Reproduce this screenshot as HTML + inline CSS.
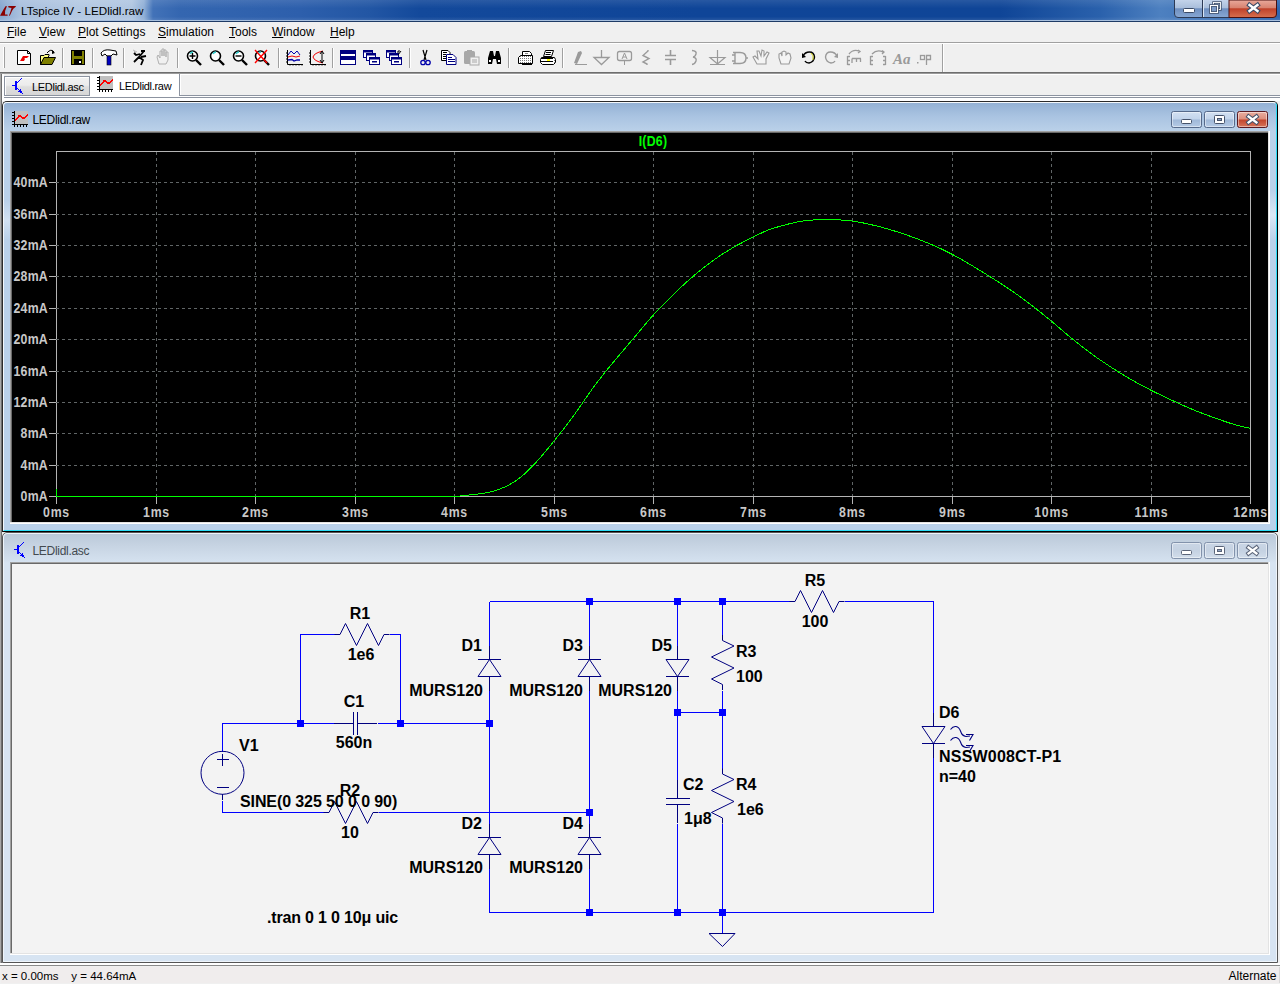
<!DOCTYPE html>
<html><head><meta charset="utf-8"><title>LTspice IV - LEDlidl.raw</title>
<style>
*{margin:0;padding:0;box-sizing:border-box}
html,body{width:1280px;height:984px;overflow:hidden;background:#f0f0f0;font-family:"Liberation Sans",sans-serif}
.a{position:absolute}
svg{position:absolute;left:0;top:0;overflow:visible}
.t{font-family:"Liberation Sans",sans-serif}
</style></head><body>

<div class="a" style="left:0;top:0;width:1280px;height:21px;background:linear-gradient(90deg,#86a6d0 0px,#a9c0de 20px,#b4c9e3 80px,#b0c6e1 132px,#90afd6 144px,#4272b8 153px,#3466b0 180px,#2d5fac 300px,#2256a4 370px,#13499b 420px,#0f4598 700px,#0f4597 1000px,#2a61ac 1100px,#4d80c0 1160px,#2f66b0 1280px)"></div>
<div class="a" style="left:0;top:0;width:1280px;height:21px;background:linear-gradient(rgba(255,255,255,0.10),rgba(255,255,255,0) 40%,rgba(0,0,0,0) 80%,rgba(255,255,255,0.12))"></div>
<div class="a" style="left:0;top:20px;width:1280px;height:1px;background:#a8c0de"></div>
<div class="a" style="left:0;top:21px;width:1280px;height:1px;background:#1f3b66"></div>
<svg width="1280" height="22"><path d="M6.5 6 L5.5 6.3 Q3 10 0 15.7 L7.7 15.7 L7.5 14.5 L5 14.5 Q4.5 11 6.8 6.5 Z" fill="#8a0000"/><path d="M8.2 6 L16 6 L15.5 7 Q13 8.5 12 11 L9.8 15.7 L9 15.5 Q10.5 12 11.5 8 L8.5 7.5 Z" fill="#8a0000"/></svg>
<svg width="1280" height="22"><text x="21" y="15" font-family="Liberation Sans" font-size="11.7" fill="#000">LTspice IV - LEDlidl.raw</text></svg>
<svg width="1280" height="22">
<defs>
<linearGradient id="cbg" x1="0" y1="0" x2="0" y2="1"><stop offset="0" stop-color="#c3d3ea"/><stop offset="0.45" stop-color="#a9bedb"/><stop offset="0.5" stop-color="#6f8fbf"/><stop offset="1" stop-color="#88a8d4"/></linearGradient>
<linearGradient id="cbr" x1="0" y1="0" x2="0" y2="1"><stop offset="0" stop-color="#e9a99c"/><stop offset="0.45" stop-color="#d8826f"/><stop offset="0.5" stop-color="#c0412a"/><stop offset="1" stop-color="#d7704f"/></linearGradient>
</defs>
<path d="M1174.5 0 L1174.5 14 Q1174.5 17.5 1178 17.5 L1273 17.5 Q1276.5 17.5 1276.5 14 L1276.5 0" fill="url(#cbg)" stroke="#2c3a55"/>
<path d="M1229 0 L1229 17.5 L1273 17.5 Q1276.5 17.5 1276.5 14 L1276.5 0 Z" fill="url(#cbr)" stroke="#4a1010"/>
<line x1="1202.5" y1="0" x2="1202.5" y2="17" stroke="#2c3a55"/>
<line x1="1203.5" y1="0" x2="1203.5" y2="17" stroke="#d8e4f3"/>
<rect x="1183.5" y="8.5" width="11" height="4" rx="1" fill="#fff" stroke="#3a4a66"/>
<rect x="1213.5" y="2.5" width="7" height="7" fill="none" stroke="#3a4a66" stroke-width="2.4"/>
<rect x="1213.5" y="2.5" width="7" height="7" fill="none" stroke="#fff" stroke-width="0.9"/>
<rect x="1210" y="5" width="8" height="8" fill="#7d9cc8"/>
<rect x="1210.5" y="5.5" width="7" height="7" fill="none" stroke="#3a4a66" stroke-width="2.6"/>
<rect x="1210.5" y="5.5" width="7" height="7" fill="none" stroke="#fff" stroke-width="1.1"/>
<path d="M1249.5 5 L1257.5 11 M1257.5 5 L1249.5 11" stroke="#3a4a66" stroke-width="4.6" stroke-linecap="square"/>
<path d="M1249.5 5 L1257.5 11 M1257.5 5 L1249.5 11" stroke="#fff" stroke-width="2.4" stroke-linecap="square"/>
</svg>
<div class="a" style="left:0;top:22px;width:1280px;height:20px;background:#f0f0f0"></div>
<div class="a" style="left:0;top:42px;width:1280px;height:1px;background:#a0a0a0"></div>
<div class="a" style="left:0;top:43px;width:1280px;height:1px;background:#fff"></div>
<div class="a t" style="left:7px;top:25px;font-size:12px;line-height:14px;color:#000;white-space:nowrap"><u>F</u>ile</div>
<div class="a t" style="left:39px;top:25px;font-size:12px;line-height:14px;color:#000;white-space:nowrap"><u>V</u>iew</div>
<div class="a t" style="left:78px;top:25px;font-size:12px;line-height:14px;color:#000;white-space:nowrap"><u>P</u>lot Settings</div>
<div class="a t" style="left:158px;top:25px;font-size:12px;line-height:14px;color:#000;white-space:nowrap"><u>S</u>imulation</div>
<div class="a t" style="left:229px;top:25px;font-size:12px;line-height:14px;color:#000;white-space:nowrap"><u>T</u>ools</div>
<div class="a t" style="left:272px;top:25px;font-size:12px;line-height:14px;color:#000;white-space:nowrap"><u>W</u>indow</div>
<div class="a t" style="left:330px;top:25px;font-size:12px;line-height:14px;color:#000;white-space:nowrap"><u>H</u>elp</div>
<div class="a" style="left:0;top:44px;width:1280px;height:28px;background:#f0f0f0"></div>
<div class="a" style="left:0;top:72px;width:1280px;height:1px;background:#555"></div>
<div class="a" style="left:0;top:73px;width:1280px;height:1px;background:#a0a0a0"></div>
<div class="a" style="left:942px;top:44px;width:1px;height:28px;background:#a0a0a0"></div>
<div class="a" style="left:943px;top:44px;width:1px;height:28px;background:#fff"></div>
<div class="a" style="left:3px;top:47px;width:1px;height:21px;background:#fff"></div>
<div class="a" style="left:4px;top:47px;width:1px;height:21px;background:#a0a0a0"></div>
<div class="a" style="left:62px;top:48px;width:1px;height:20px;background:#a0a0a0"></div>
<div class="a" style="left:63px;top:48px;width:1px;height:20px;background:#fff"></div>
<div class="a" style="left:92px;top:48px;width:1px;height:20px;background:#a0a0a0"></div>
<div class="a" style="left:93px;top:48px;width:1px;height:20px;background:#fff"></div>
<div class="a" style="left:123px;top:48px;width:1px;height:20px;background:#a0a0a0"></div>
<div class="a" style="left:124px;top:48px;width:1px;height:20px;background:#fff"></div>
<div class="a" style="left:177px;top:48px;width:1px;height:20px;background:#a0a0a0"></div>
<div class="a" style="left:178px;top:48px;width:1px;height:20px;background:#fff"></div>
<div class="a" style="left:278px;top:48px;width:1px;height:20px;background:#a0a0a0"></div>
<div class="a" style="left:279px;top:48px;width:1px;height:20px;background:#fff"></div>
<div class="a" style="left:332px;top:48px;width:1px;height:20px;background:#a0a0a0"></div>
<div class="a" style="left:333px;top:48px;width:1px;height:20px;background:#fff"></div>
<div class="a" style="left:409px;top:48px;width:1px;height:20px;background:#a0a0a0"></div>
<div class="a" style="left:410px;top:48px;width:1px;height:20px;background:#fff"></div>
<div class="a" style="left:508px;top:48px;width:1px;height:20px;background:#a0a0a0"></div>
<div class="a" style="left:509px;top:48px;width:1px;height:20px;background:#fff"></div>
<div class="a" style="left:562px;top:48px;width:1px;height:20px;background:#a0a0a0"></div>
<div class="a" style="left:563px;top:48px;width:1px;height:20px;background:#fff"></div>
<svg width="1280" height="80">
<path d="M17.5 50.5 L27.5 50.5 L30.5 53.5 L30.5 64.5 L17.5 64.5 Z" fill="#fff" stroke="#000"/><path d="M27.5 50.5 L27.5 53.5 L30.5 53.5" fill="none" stroke="#000"/><path d="M20 61 L23 56 L29 56 L27 58 L25 58 L23 61 Z M22 59 L25 59 L24 61 L21 61Z" fill="#e00"/>
<path d="M40.5 55.5 L44 55.5 L45 54.5 L49 54.5 L49 56 L40.5 64.5 Z" fill="#ffff80" stroke="#000"/><path d="M40.5 64.5 L44 57.5 L55.5 57.5 L52 64.5 Z" fill="#808000" stroke="#000"/><path d="M47 53 Q51 48 54 52" fill="none" stroke="#000"/><path d="M52 50 L55 53 L52 54 Z" fill="#000"/>
<rect x="71.5" y="50.5" width="13" height="14" fill="#808000" stroke="#000"/><rect x="74" y="51" width="8" height="5" fill="#000"/><rect x="74" y="59" width="8" height="5" fill="#000"/><rect x="79" y="61" width="2" height="2" fill="#fff"/>
<path d="M101 53 Q104 49 110 50 L116 51 L117 55 L113 54 L111 56 L107 56 L105 54 L102 56 Z" fill="#fff" stroke="#000"/><rect x="107" y="56" width="4" height="9" fill="#0000c0" stroke="#000" stroke-width="0.6"/>
<path d="M141 51 L145 51 M144 51 L139 57 L143 60 L141 65 M139 57 L134 62 M140 54 L136 55 L134 53 M141 57 L146 56" fill="none" stroke="#000" stroke-width="1.8"/><path d="M133 50 L137 52 M134 51 L136 53" stroke="#aaa" stroke-width="0.8"/>
<path d="M159 64 L157 57 L158 55 L160 58 L160 51 L162 51 L162 56 L162 49 L164 49 L164 56 L164 50 L166 50 L166 57 L166 52 L168 52 L168 60 L166 64 Z" fill="#f0f0f0" stroke="#b0b0b0"/>
<circle cx="192.5" cy="56" r="5" fill="#fff" stroke="#000" stroke-width="1.6"/><path d="M190 54 Q191 52 193 52" stroke="#3cc" stroke-width="1.5" fill="none"/><path d="M196 60 L201 65" stroke="#000" stroke-width="2.4"/><path d="M189.5 56 L195.5 56 M192.5 53 L192.5 59" stroke="#000" stroke-width="1.4"/>
<circle cx="215.5" cy="56" r="5" fill="#fff" stroke="#000" stroke-width="1.6"/><path d="M213 54 Q214 52 216 52" stroke="#3cc" stroke-width="1.5" fill="none"/><path d="M219 60 L224 65" stroke="#000" stroke-width="2.4"/>
<circle cx="238.5" cy="56" r="5" fill="#fff" stroke="#000" stroke-width="1.6"/><path d="M236 54 Q237 52 239 52" stroke="#3cc" stroke-width="1.5" fill="none"/><path d="M242 60 L247 65" stroke="#000" stroke-width="2.4"/><path d="M235.5 56 L241.5 56" stroke="#000" stroke-width="1.4"/>
<circle cx="260.5" cy="56" r="5" fill="#fff" stroke="#000" stroke-width="1.6"/><path d="M258 54 Q259 52 261 52" stroke="#3cc" stroke-width="1.5" fill="none"/><path d="M264 60 L269 65" stroke="#000" stroke-width="2.4"/><path d="M255 50 L267 63 M267 50 L255 63" stroke="#f00" stroke-width="1.4"/>
<path d="M287.5 50 L287.5 64.5 L303 64.5" stroke="#000" fill="none"/><path d="M286 53 L287 53 M286 56 L287 56 M286 59 L287 59 M286 62 L287 62 M290 65.5 L290 66 M293 65.5 L293 66 M296 65.5 L296 66 M299 65.5 L299 66 M302 65.5 L302 66" stroke="#000"/><path d="M288 55 L291 51 L294 54 L297 51 L300 55" stroke="#00a" fill="none"/><path d="M288 57 L292 56 L296 57 L300 56" stroke="#e00" fill="none"/><path d="M288 60 L292 59.5 L294 61 L297 60 L300 60" stroke="#00a" fill="none" stroke-width="1.3"/>
<path d="M310.5 50 L310.5 64.5 L326 64.5" stroke="#000" fill="none"/><path d="M309 53 L310 53 M309 56 L310 56 M309 59 L310 59 M309 62 L310 62 M313 65.5 L313 66 M316 65.5 L316 66 M319 65.5 L319 66 M322 65.5 L322 66 M325 65.5 L325 66" stroke="#000"/><path d="M323 51 Q314 53 313 57 Q314 61 323 63" stroke="#e00" fill="none"/><path d="M322 52 L322 62 M320 54 L322 51 L324 54 M320 60 L322 63 L324 60" stroke="#000" fill="none"/>
<rect x="340.5" y="50.5" width="15" height="14" fill="#fff" stroke="#000080"/><rect x="341" y="51" width="14" height="3" fill="#000080"/><rect x="341" y="56" width="14" height="2" fill="#000080"/><rect x="341" y="57" width="14" height="3" fill="#000080"/>
<rect x="363.5" y="50.5" width="9" height="7" fill="#fff" stroke="#000080"/><rect x="363" y="50" width="10" height="2.5" fill="#000080"/><rect x="366.5" y="53.5" width="9" height="7" fill="#fff" stroke="#000080"/><rect x="366" y="53" width="10" height="2.5" fill="#000080"/><rect x="369.5" y="57.5" width="10" height="7" fill="#fff" stroke="#000080"/><rect x="369" y="57" width="11" height="2.5" fill="#000080"/><rect x="372" y="61" width="5" height="1.5" fill="#000080"/>
<rect x="386.5" y="50.5" width="9" height="7" fill="#fff" stroke="#000080"/><rect x="386" y="50" width="10" height="2.5" fill="#000080"/><rect x="389.5" y="53.5" width="9" height="7" fill="#fff" stroke="#000080"/><rect x="389" y="53" width="10" height="2.5" fill="#000080"/><rect x="391.5" y="57.5" width="10" height="7" fill="#fff" stroke="#000080"/><rect x="391" y="57" width="11" height="2.5" fill="#000080"/><rect x="394" y="61" width="5" height="1.5" fill="#000080"/><path d="M398 55 L401 51 M398 51 L398 53 M398 51 L400 51" stroke="#000" fill="none"/>
<path d="M423 50 L426 60 M427 50 L424 60" stroke="#000" stroke-width="1.2"/><circle cx="423" cy="62.5" r="2.2" fill="none" stroke="#00a" stroke-width="1.3"/><circle cx="428" cy="62.5" r="2.2" fill="none" stroke="#00a" stroke-width="1.3"/>
<path d="M441.5 50.5 L448 50.5 L450 52.5 L450 60.5 L441.5 60.5 Z" fill="#fff" stroke="#000"/><path d="M443 52.5 L447 52.5 M443 54.5 L446 54.5 M443 56.5 L446 56.5 M443 58.5 L446 58.5" stroke="#000" fill="none"/><path d="M446.5 54.5 L453 54.5 L456 57.5 L456 64.5 L446.5 64.5 Z" fill="#fff" stroke="#000080"/><path d="M448 57.5 L452 57.5 M448 59.5 L455 59.5 M448 61.5 L455 61.5" stroke="#000080" fill="none"/>
<rect x="464" y="51" width="11" height="13" rx="1.5" fill="#a8a8a8"/><rect x="467" y="50" width="5" height="2" fill="#a8a8a8"/><rect x="470" y="57" width="9" height="8" fill="#f0f0f0" stroke="#a8a8a8"/><path d="M472 60 L477 60 M472 62 L477 62" stroke="#a8a8a8"/>
<path d="M488 64 L488 58 L490 51 L493 51 L494 56 L495 56 L496 51 L499 51 L501 58 L501 64 L497 64 L496 59 L493 59 L492 64 Z" fill="#000"/><rect x="489" y="60" width="2" height="2" fill="#fff"/><rect x="498" y="60" width="2" height="2" fill="#fff"/>
<defs><pattern id="hatch" width="2" height="2" patternUnits="userSpaceOnUse"><rect width="2" height="2" fill="#fff"/><rect width="1" height="1" fill="#777"/></pattern></defs>
<path d="M522.5 51.5 H529.5 L531.5 53.5 V55.5 H522.5 Z" fill="#fff" stroke="#000"/><path d="M520.5 55.5 H532.5 V63.5 H518.5 V57.5 Z" fill="url(#hatch)" stroke="#000"/><rect x="522" y="63" width="10" height="2" fill="#000"/><rect x="525" y="53" width="3" height="1" fill="#888"/>
<path d="M545.5 50.5 H553.5 L551.5 56.5 H543.5 Z" fill="#fff" stroke="#000"/><path d="M546 52.5 H551 M545.5 54.5 H550.5" stroke="#000" fill="none"/><path d="M541.5 57.5 H554.5 L555.5 59.5 V62.5 L553.5 64.5 H542.5 L540.5 62.5 V59.5 Z" fill="#fff" stroke="#000"/><path d="M541 58.5 H555 M541 61.5 H555" stroke="#000" fill="none"/><rect x="547" y="59" width="3" height="2" fill="#ff0"/><rect x="553" y="58" width="2" height="5" fill="url(#hatch)"/>
<path d="M574 63 L578 52 L581 51 L582 53 L577 64 Z" fill="#9a9a9a"/><path d="M575 64.5 L587 64.5" stroke="#9a9a9a"/>
<path d="M601.5 50 L601.5 57 M594 57.5 L609 57.5 L601.5 64.5 Z" fill="none" stroke="#9a9a9a" stroke-width="1.3"/>
<rect x="617.5" y="51.5" width="14" height="9" rx="2" fill="none" stroke="#9a9a9a" stroke-width="1.3"/><path d="M624.5 61 L624.5 65" stroke="#9a9a9a"/><path d="M622 59 L624.5 53 L627 59 M623 57 L626 57" stroke="#9a9a9a" fill="none"/>
<path d="M648 50 L648 51 L643 55.5 L649 58.5 L643 62 L647 64 L647 65" stroke="#9a9a9a" fill="none" stroke-width="1.4"/>
<path d="M670.5 50 L670.5 55 M665 55.5 L676 55.5 M665 59.5 L676 59.5 M670.5 60 L670.5 65" stroke="#9a9a9a" stroke-width="1.6" fill="none"/>
<path d="M692 50.5 Q697 51 696 54 Q695 57 693 57 Q697 58 696 61 Q695 64 692 64.5" stroke="#9a9a9a" stroke-width="1.4" fill="none"/>
<path d="M717.5 50 L717.5 65 M710 57.5 L725 57.5 L717.5 64 Z M710 64.5 L725 64.5" stroke="#9a9a9a" stroke-width="1.2" fill="none"/>
<path d="M733 52.5 L740 52.5 Q746 52.5 746 58 Q746 63.5 740 63.5 L733 63.5 M735 52.5 L735 63.5 M732 55 L735 55 M732 61 L735 61 M746 58 L748 58" stroke="#9a9a9a" stroke-width="1.4" fill="none"/>
<path d="M757 64 L753 57 L755 56 L758 59 L757 51 L759 51 L761 56 L762 50 L764 51 L764 56 L767 52 L769 53 L766 59 L766 64 Z" fill="#f4f4f4" stroke="#9a9a9a" stroke-width="1.1"/>
<path d="M781 64 L779 58 L779 54 L781 53 L782 56 L782 52 L784 51 L786 52 L786 55 L788 53 L790 54 L791 58 L789 64 Z" fill="#f4f4f4" stroke="#9a9a9a" stroke-width="1.1"/>
<path d="M803 56 Q805 52 809.5 52 Q814 52 814.5 57 Q814 62 809 63 Q806 63 805 61" stroke="#000" stroke-width="1.5" fill="none"/><path d="M802 53 L802 58 L806 57 Z" fill="#000"/><path d="M811 53 Q814 55 813 60" stroke="#cc0" stroke-width="0.9" fill="none"/>
<path d="M837 56 Q835 52 830.5 52 Q826 52 825.5 57 Q826 62 831 63 Q834 63 835 61" stroke="#9a9a9a" stroke-width="1.4" fill="none"/><path d="M838 53 L838 58 L834 57 Z" fill="#9a9a9a"/>
<path d="M847.5 56 L847.5 65 M847.5 56.5 L850 56.5 M847.5 60.5 L850 60.5 M847.5 64.5 L850 64.5 M852 58.5 L852 63 M852 58.5 L861 58.5 M856.5 58.5 L856.5 62 M860.5 58.5 L860.5 62 M849 54 Q853 49 859 51 M858 50 L860 51.5 L858 53" stroke="#9a9a9a" stroke-width="1.3" fill="none"/>
<path d="M870.5 56 L870.5 65 M870.5 56.5 L873 56.5 M870.5 60.5 L873 60.5 M870.5 64.5 L873 64.5 M885.5 56 L885.5 65 M885.5 56.5 L883 56.5 M885.5 60.5 L883 60.5 M885.5 64.5 L883 64.5 M872 54 Q877 49 883 52 M882 50.5 L884 52 L882 54" stroke="#9a9a9a" stroke-width="1.3" fill="none"/>
<text x="893" y="64" font-family="Liberation Serif" font-style="italic" font-weight="bold" font-size="15" fill="#9a9a9a">Aa</text>
<rect x="917" y="62" width="1.5" height="1.5" fill="#9a9a9a"/><rect x="920.5" y="55.5" width="4" height="4" fill="none" stroke="#9a9a9a" stroke-width="1.3"/><path d="M926.5 65 L926.5 55.5 L930.5 55.5 L930.5 59.5 L926.5 59.5" stroke="#9a9a9a" stroke-width="1.3" fill="none"/>
</svg>
<div class="a" style="left:0;top:74px;width:1280px;height:24px;background:#f0f0f0"></div>
<div class="a" style="left:0;top:72px;width:1280px;height:1px;background:#6e6e6e"></div>
<div class="a" style="left:0;top:73px;width:1280px;height:1px;background:#9a9a9a"></div>
<div class="a" style="left:0;top:74px;width:1280px;height:27px;background:#f0f0f0"></div>
<div class="a" style="left:179px;top:74px;width:1101px;height:22px;border-left:1px solid #8c93a0;border-bottom:1px solid #8c93a0;background:#f0f0f0"></div>
<div class="a" style="left:180px;top:74px;width:1100px;height:1px;background:#fff"></div>
<div class="a" style="left:180px;top:74px;width:1px;height:21px;background:#fff"></div>
<div class="a" style="left:4px;top:76px;width:86px;height:20px;border:1px solid #8c93a0;background:linear-gradient(#f2f2f2,#ececec 45%,#dedede 55%,#d6d6d6)"></div>
<div class="a" style="left:5px;top:77px;width:84px;height:1px;background:#fff"></div>
<div class="a" style="left:5px;top:77px;width:1px;height:18px;background:#fff"></div>
<div class="a" style="left:90px;top:74px;width:89px;height:23px;background:#fff"></div>
<div class="a" style="left:2px;top:96px;width:1278px;height:1px;background:#fff"></div>
<div class="a" style="left:2px;top:97px;width:1278px;height:1px;background:#8c93a0"></div>
<div class="a" style="left:2px;top:98px;width:1278px;height:3px;background:#fff"></div>
<div class="a" style="left:2px;top:74px;width:2px;height:24px;background:#fff"></div>
<svg width="1280" height="100"><rect x="15" y="81" width="2" height="9" fill="#0000ff"/><rect x="12" y="85" width="3" height="1" fill="#0000ff"/><rect x="17" y="82" width="1" height="1" fill="#0000ff"/><rect x="18" y="81" width="1" height="1" fill="#0000ff"/><rect x="19" y="80" width="1" height="1" fill="#0000ff"/><rect x="20" y="79" width="1" height="1" fill="#0000ff"/><rect x="21" y="78" width="1" height="1" fill="#0000ff"/><rect x="17" y="88" width="1" height="1" fill="#0000ff"/><rect x="18" y="89" width="1" height="1" fill="#0000ff"/><rect x="19" y="90" width="1" height="1" fill="#0000ff"/><rect x="20" y="91" width="1" height="1" fill="#0000ff"/><rect x="21" y="92" width="1" height="1" fill="#0000ff"/><rect x="22" y="93" width="1" height="1" fill="#0000ff"/><rect x="20" y="89" width="1" height="1" fill="#0000ff"/><rect x="20" y="90" width="1" height="1" fill="#0000ff"/><rect x="18" y="91" width="4" height="1" fill="#0000ff"/><rect x="20" y="92" width="2" height="1" fill="#0000ff"/><rect x="100" y="76" width="13" height="13" fill="#c0c0c0"/><rect x="99" y="76" width="1" height="14" fill="#000"/><rect x="97" y="89" width="16" height="1" fill="#000"/><rect x="97" y="77" width="2" height="1" fill="#000"/><rect x="97" y="80" width="2" height="1" fill="#000"/><rect x="97" y="83" width="2" height="1" fill="#000"/><rect x="97" y="86" width="2" height="1" fill="#000"/><rect x="99" y="90" width="1" height="2" fill="#000"/><rect x="102" y="90" width="1" height="2" fill="#000"/><rect x="105" y="90" width="1" height="2" fill="#000"/><rect x="108" y="90" width="1" height="2" fill="#000"/><rect x="111" y="90" width="1" height="2" fill="#000"/><rect x="100" y="84" width="1" height="2" fill="#ff0000"/><rect x="101" y="83" width="1" height="2" fill="#ff0000"/><rect x="102" y="82" width="1" height="2" fill="#ff0000"/><rect x="103" y="81" width="1" height="2" fill="#ff0000"/><rect x="104" y="80" width="1" height="2" fill="#ff0000"/><rect x="105" y="80" width="1" height="2" fill="#ff0000"/><rect x="106" y="81" width="1" height="2" fill="#ff0000"/><rect x="107" y="82" width="1" height="2" fill="#ff0000"/><rect x="108" y="82" width="1" height="2" fill="#ff0000"/><rect x="109" y="82" width="1" height="2" fill="#ff0000"/><rect x="110" y="81" width="1" height="2" fill="#ff0000"/><rect x="111" y="80" width="1" height="2" fill="#ff0000"/><rect x="112" y="79" width="1" height="2" fill="#ff0000"/><rect x="103" y="80" width="2" height="1" fill="#ff0000"/><rect x="106" y="82" width="1" height="1" fill="#ff0000"/></svg>
<div class="a t" style="left:32px;top:80px;font-size:11px;letter-spacing:-0.3px;line-height:14px;color:#000;white-space:nowrap">LEDlidl.asc</div>
<div class="a t" style="left:119px;top:79px;font-size:11px;letter-spacing:-0.3px;line-height:14px;color:#000;white-space:nowrap">LEDlidl.raw</div>
<div class="a" style="left:0;top:74px;width:2px;height:890px;background:linear-gradient(90deg,#a8a8a8 0,#a8a8a8 1px,#6f6f6f 1px)"></div>
<div class="a" style="left:2px;top:101px;width:1276px;height:431px;border:1px solid #2b2b2b;border-right-color:#000;border-bottom-color:#000;border-radius:5px 5px 0 0;background:linear-gradient(#92b0d4 0px,#a9c3e1 14px,#b8cfe8 27px,#bad1ea 30px,#bad1ea 100%)"></div>
<div class="a" style="left:3px;top:102px;width:1274px;height:429px;border:1px solid #f3f7fb;border-right-color:#2bdcf6;border-bottom-color:#2bdcf6;border-radius:4px 4px 0 0"></div>
<svg width="1280" height="140"><rect x="15" y="111" width="13" height="13" fill="#c0c0c0"/><rect x="14" y="111" width="1" height="14" fill="#000"/><rect x="12" y="124" width="16" height="1" fill="#000"/><rect x="12" y="112" width="2" height="1" fill="#000"/><rect x="12" y="115" width="2" height="1" fill="#000"/><rect x="12" y="118" width="2" height="1" fill="#000"/><rect x="12" y="121" width="2" height="1" fill="#000"/><rect x="14" y="125" width="1" height="2" fill="#000"/><rect x="17" y="125" width="1" height="2" fill="#000"/><rect x="20" y="125" width="1" height="2" fill="#000"/><rect x="23" y="125" width="1" height="2" fill="#000"/><rect x="26" y="125" width="1" height="2" fill="#000"/><rect x="15" y="119" width="1" height="2" fill="#ff0000"/><rect x="16" y="118" width="1" height="2" fill="#ff0000"/><rect x="17" y="117" width="1" height="2" fill="#ff0000"/><rect x="18" y="116" width="1" height="2" fill="#ff0000"/><rect x="19" y="115" width="1" height="2" fill="#ff0000"/><rect x="20" y="115" width="1" height="2" fill="#ff0000"/><rect x="21" y="116" width="1" height="2" fill="#ff0000"/><rect x="22" y="117" width="1" height="2" fill="#ff0000"/><rect x="23" y="117" width="1" height="2" fill="#ff0000"/><rect x="24" y="117" width="1" height="2" fill="#ff0000"/><rect x="25" y="116" width="1" height="2" fill="#ff0000"/><rect x="26" y="115" width="1" height="2" fill="#ff0000"/><rect x="27" y="114" width="1" height="2" fill="#ff0000"/><rect x="18" y="115" width="2" height="1" fill="#ff0000"/><rect x="21" y="117" width="1" height="1" fill="#ff0000"/><text x="32.5" y="124" font-family="Liberation Sans" font-size="12" letter-spacing="-0.3" fill="#000">LEDlidl.raw</text></svg>
<svg width="1280" height="984">
<defs>
<linearGradient id="pwb" x1="0" y1="0" x2="0" y2="1"><stop offset="0" stop-color="#d3e1f2"/><stop offset="0.48" stop-color="#c2d4eb"/><stop offset="0.52" stop-color="#9fb8d8"/><stop offset="1" stop-color="#b6cbe6"/></linearGradient>
<linearGradient id="pwr" x1="0" y1="0" x2="0" y2="1"><stop offset="0" stop-color="#eab0a2"/><stop offset="0.48" stop-color="#dc8e7c"/><stop offset="0.52" stop-color="#c2452c"/><stop offset="1" stop-color="#d7775d"/></linearGradient>
</defs>
<rect x="1171.5" y="111.5" width="30" height="16" rx="2" fill="url(#pwb)" stroke="#55698a"/>
<rect x="1204.5" y="111.5" width="30" height="16" rx="2" fill="url(#pwb)" stroke="#55698a"/>
<rect x="1237.5" y="111.5" width="30" height="16" rx="2" fill="url(#pwr)" stroke="#5a1a22"/>
<rect x="1172.5" y="112.5" width="28" height="14" rx="1.5" fill="none" stroke="#fff" stroke-opacity="0.45"/>
<rect x="1205.5" y="112.5" width="28" height="14" rx="1.5" fill="none" stroke="#fff" stroke-opacity="0.45"/>
<rect x="1238.5" y="112.5" width="28" height="14" rx="1.5" fill="none" stroke="#fff" stroke-opacity="0.45"/>
<rect x="1181.5" y="119.5" width="10" height="4" rx="1" fill="#fff" stroke="#45526a"/>
<rect x="1214.5" y="115.5" width="10" height="8" rx="1" fill="#fff" stroke="#45526a"/>
<rect x="1217.5" y="118.5" width="4" height="2" fill="#8ea4c4" stroke="#45526a"/>
<path d="M1248.5 116.5 L1256.5 122.5 M1256.5 116.5 L1248.5 122.5" stroke="#45526a" stroke-width="4.2" stroke-linecap="square"/>
<path d="M1248.5 116.5 L1256.5 122.5 M1256.5 116.5 L1248.5 122.5" stroke="#fff" stroke-width="2.2" stroke-linecap="square"/>
</svg>
<div class="a" style="left:1270px;top:190px;width:6px;height:50px;background:linear-gradient(rgba(230,240,250,0),rgba(230,240,250,0.75) 50%,rgba(230,240,250,0))"></div>
<div class="a" style="left:4px;top:200px;width:6px;height:40px;background:linear-gradient(rgba(225,236,248,0),rgba(225,236,248,0.6) 50%,rgba(225,236,248,0))"></div>
<div class="a" style="left:10px;top:131px;width:1260px;height:393px;background:#fff"></div>
<div class="a" style="left:10px;top:131px;width:1259px;height:392px;background:#e3e3e3"></div>
<div class="a" style="left:10px;top:131px;width:1258px;height:391px;background:#a0a0a0"></div>
<div class="a" style="left:11px;top:132px;width:1257px;height:390px;background:#696969"></div>
<div class="a" style="left:12px;top:133px;width:1256px;height:389px;background:#000"></div>
<svg width="1280" height="540" shape-rendering="crispEdges">
<rect x="56.5" y="151.5" width="1194" height="345" fill="none" stroke="#b4b4b4"/>
<line x1="156.5" y1="152" x2="156.5" y2="496" stroke="#606566" stroke-dasharray="3 3"/>
<line x1="255.5" y1="152" x2="255.5" y2="496" stroke="#606566" stroke-dasharray="3 3"/>
<line x1="355.5" y1="152" x2="355.5" y2="496" stroke="#606566" stroke-dasharray="3 3"/>
<line x1="454.5" y1="152" x2="454.5" y2="496" stroke="#606566" stroke-dasharray="3 3"/>
<line x1="554.5" y1="152" x2="554.5" y2="496" stroke="#606566" stroke-dasharray="3 3"/>
<line x1="653.5" y1="152" x2="653.5" y2="496" stroke="#606566" stroke-dasharray="3 3"/>
<line x1="753.5" y1="152" x2="753.5" y2="496" stroke="#606566" stroke-dasharray="3 3"/>
<line x1="852.5" y1="152" x2="852.5" y2="496" stroke="#606566" stroke-dasharray="3 3"/>
<line x1="952.5" y1="152" x2="952.5" y2="496" stroke="#606566" stroke-dasharray="3 3"/>
<line x1="1051.5" y1="152" x2="1051.5" y2="496" stroke="#606566" stroke-dasharray="3 3"/>
<line x1="1151.5" y1="152" x2="1151.5" y2="496" stroke="#606566" stroke-dasharray="3 3"/>
<line x1="56.5" y1="497" x2="56.5" y2="504" stroke="#b4b4b4"/>
<line x1="156.5" y1="497" x2="156.5" y2="504" stroke="#b4b4b4"/>
<line x1="255.5" y1="497" x2="255.5" y2="504" stroke="#b4b4b4"/>
<line x1="355.5" y1="497" x2="355.5" y2="504" stroke="#b4b4b4"/>
<line x1="454.5" y1="497" x2="454.5" y2="504" stroke="#b4b4b4"/>
<line x1="554.5" y1="497" x2="554.5" y2="504" stroke="#b4b4b4"/>
<line x1="653.5" y1="497" x2="653.5" y2="504" stroke="#b4b4b4"/>
<line x1="753.5" y1="497" x2="753.5" y2="504" stroke="#b4b4b4"/>
<line x1="852.5" y1="497" x2="852.5" y2="504" stroke="#b4b4b4"/>
<line x1="952.5" y1="497" x2="952.5" y2="504" stroke="#b4b4b4"/>
<line x1="1051.5" y1="497" x2="1051.5" y2="504" stroke="#b4b4b4"/>
<line x1="1151.5" y1="497" x2="1151.5" y2="504" stroke="#b4b4b4"/>
<line x1="1250.5" y1="497" x2="1250.5" y2="504" stroke="#b4b4b4"/>
<line x1="56" y1="465.5" x2="1250" y2="465.5" stroke="#606566" stroke-dasharray="3 3"/>
<line x1="56" y1="433.5" x2="1250" y2="433.5" stroke="#606566" stroke-dasharray="3 3"/>
<line x1="56" y1="402.5" x2="1250" y2="402.5" stroke="#606566" stroke-dasharray="3 3"/>
<line x1="56" y1="371.5" x2="1250" y2="371.5" stroke="#606566" stroke-dasharray="3 3"/>
<line x1="56" y1="339.5" x2="1250" y2="339.5" stroke="#606566" stroke-dasharray="3 3"/>
<line x1="56" y1="308.5" x2="1250" y2="308.5" stroke="#606566" stroke-dasharray="3 3"/>
<line x1="56" y1="276.5" x2="1250" y2="276.5" stroke="#606566" stroke-dasharray="3 3"/>
<line x1="56" y1="245.5" x2="1250" y2="245.5" stroke="#606566" stroke-dasharray="3 3"/>
<line x1="56" y1="214.5" x2="1250" y2="214.5" stroke="#606566" stroke-dasharray="3 3"/>
<line x1="56" y1="182.5" x2="1250" y2="182.5" stroke="#606566" stroke-dasharray="3 3"/>
<line x1="49" y1="496.5" x2="56" y2="496.5" stroke="#b4b4b4"/>
<line x1="49" y1="465.5" x2="56" y2="465.5" stroke="#b4b4b4"/>
<line x1="49" y1="433.5" x2="56" y2="433.5" stroke="#b4b4b4"/>
<line x1="49" y1="402.5" x2="56" y2="402.5" stroke="#b4b4b4"/>
<line x1="49" y1="371.5" x2="56" y2="371.5" stroke="#b4b4b4"/>
<line x1="49" y1="339.5" x2="56" y2="339.5" stroke="#b4b4b4"/>
<line x1="49" y1="308.5" x2="56" y2="308.5" stroke="#b4b4b4"/>
<line x1="49" y1="276.5" x2="56" y2="276.5" stroke="#b4b4b4"/>
<line x1="49" y1="245.5" x2="56" y2="245.5" stroke="#b4b4b4"/>
<line x1="49" y1="214.5" x2="56" y2="214.5" stroke="#b4b4b4"/>
<line x1="49" y1="182.5" x2="56" y2="182.5" stroke="#b4b4b4"/>
</svg>
<svg width="1280" height="540">
<g transform="translate(48,501) scale(0.88,1)"><text x="0" y="0" text-anchor="end" font-family="Liberation Sans" font-weight="bold" font-size="14" letter-spacing="0.3" fill="#c8c8c8">0mA</text></g>
<g transform="translate(48,470) scale(0.88,1)"><text x="0" y="0" text-anchor="end" font-family="Liberation Sans" font-weight="bold" font-size="14" letter-spacing="0.3" fill="#c8c8c8">4mA</text></g>
<g transform="translate(48,438) scale(0.88,1)"><text x="0" y="0" text-anchor="end" font-family="Liberation Sans" font-weight="bold" font-size="14" letter-spacing="0.3" fill="#c8c8c8">8mA</text></g>
<g transform="translate(48,407) scale(0.88,1)"><text x="0" y="0" text-anchor="end" font-family="Liberation Sans" font-weight="bold" font-size="14" letter-spacing="0.3" fill="#c8c8c8">12mA</text></g>
<g transform="translate(48,376) scale(0.88,1)"><text x="0" y="0" text-anchor="end" font-family="Liberation Sans" font-weight="bold" font-size="14" letter-spacing="0.3" fill="#c8c8c8">16mA</text></g>
<g transform="translate(48,344) scale(0.88,1)"><text x="0" y="0" text-anchor="end" font-family="Liberation Sans" font-weight="bold" font-size="14" letter-spacing="0.3" fill="#c8c8c8">20mA</text></g>
<g transform="translate(48,313) scale(0.88,1)"><text x="0" y="0" text-anchor="end" font-family="Liberation Sans" font-weight="bold" font-size="14" letter-spacing="0.3" fill="#c8c8c8">24mA</text></g>
<g transform="translate(48,281) scale(0.88,1)"><text x="0" y="0" text-anchor="end" font-family="Liberation Sans" font-weight="bold" font-size="14" letter-spacing="0.3" fill="#c8c8c8">28mA</text></g>
<g transform="translate(48,250) scale(0.88,1)"><text x="0" y="0" text-anchor="end" font-family="Liberation Sans" font-weight="bold" font-size="14" letter-spacing="0.3" fill="#c8c8c8">32mA</text></g>
<g transform="translate(48,219) scale(0.88,1)"><text x="0" y="0" text-anchor="end" font-family="Liberation Sans" font-weight="bold" font-size="14" letter-spacing="0.3" fill="#c8c8c8">36mA</text></g>
<g transform="translate(48,187) scale(0.88,1)"><text x="0" y="0" text-anchor="end" font-family="Liberation Sans" font-weight="bold" font-size="14" letter-spacing="0.3" fill="#c8c8c8">40mA</text></g>
<g transform="translate(56.5,517) scale(0.88,1)"><text x="0" y="0" text-anchor="middle" font-family="Liberation Sans" font-weight="bold" font-size="14" letter-spacing="0.9" fill="#c8c8c8">0ms</text></g>
<g transform="translate(156.5,517) scale(0.88,1)"><text x="0" y="0" text-anchor="middle" font-family="Liberation Sans" font-weight="bold" font-size="14" letter-spacing="0.9" fill="#c8c8c8">1ms</text></g>
<g transform="translate(255.5,517) scale(0.88,1)"><text x="0" y="0" text-anchor="middle" font-family="Liberation Sans" font-weight="bold" font-size="14" letter-spacing="0.9" fill="#c8c8c8">2ms</text></g>
<g transform="translate(355.5,517) scale(0.88,1)"><text x="0" y="0" text-anchor="middle" font-family="Liberation Sans" font-weight="bold" font-size="14" letter-spacing="0.9" fill="#c8c8c8">3ms</text></g>
<g transform="translate(454.5,517) scale(0.88,1)"><text x="0" y="0" text-anchor="middle" font-family="Liberation Sans" font-weight="bold" font-size="14" letter-spacing="0.9" fill="#c8c8c8">4ms</text></g>
<g transform="translate(554.5,517) scale(0.88,1)"><text x="0" y="0" text-anchor="middle" font-family="Liberation Sans" font-weight="bold" font-size="14" letter-spacing="0.9" fill="#c8c8c8">5ms</text></g>
<g transform="translate(653.5,517) scale(0.88,1)"><text x="0" y="0" text-anchor="middle" font-family="Liberation Sans" font-weight="bold" font-size="14" letter-spacing="0.9" fill="#c8c8c8">6ms</text></g>
<g transform="translate(753.5,517) scale(0.88,1)"><text x="0" y="0" text-anchor="middle" font-family="Liberation Sans" font-weight="bold" font-size="14" letter-spacing="0.9" fill="#c8c8c8">7ms</text></g>
<g transform="translate(852.5,517) scale(0.88,1)"><text x="0" y="0" text-anchor="middle" font-family="Liberation Sans" font-weight="bold" font-size="14" letter-spacing="0.9" fill="#c8c8c8">8ms</text></g>
<g transform="translate(952.5,517) scale(0.88,1)"><text x="0" y="0" text-anchor="middle" font-family="Liberation Sans" font-weight="bold" font-size="14" letter-spacing="0.9" fill="#c8c8c8">9ms</text></g>
<g transform="translate(1051.5,517) scale(0.88,1)"><text x="0" y="0" text-anchor="middle" font-family="Liberation Sans" font-weight="bold" font-size="14" letter-spacing="0.9" fill="#c8c8c8">10ms</text></g>
<g transform="translate(1151.5,517) scale(0.88,1)"><text x="0" y="0" text-anchor="middle" font-family="Liberation Sans" font-weight="bold" font-size="14" letter-spacing="0.9" fill="#c8c8c8">11ms</text></g>
<g transform="translate(1250.5,517) scale(0.88,1)"><text x="0" y="0" text-anchor="middle" font-family="Liberation Sans" font-weight="bold" font-size="14" letter-spacing="0.9" fill="#c8c8c8">12ms</text></g>
<g transform="translate(653,146) scale(0.88,1)"><text x="0" y="0" text-anchor="middle" font-family="Liberation Sans" font-weight="bold" font-size="14" letter-spacing="0.3" fill="#00ff00">I(D6)</text></g>
<path d="M56.00 496.50 L456.50 496.50 L456.50 496.50 L460.43 496.01 L465.98 495.32 L471.06 494.71 L474.88 494.32 L478.22 494.00 L481.38 493.62 L484.37 493.18 L487.18 492.68 L490.00 492.06 L492.92 491.31 L495.85 490.45 L498.75 489.46 L501.60 488.35 L504.41 487.12 L507.19 485.77 L509.88 484.38 L512.55 482.87 L515.31 481.10 L518.18 479.09 L521.16 476.82 L524.38 474.08 L527.92 470.76 L531.70 466.98 L535.62 462.83 L539.72 458.23 L543.95 453.27 L548.12 448.29 L552.16 443.38 L556.14 438.45 L560.06 433.50 L563.96 428.51 L567.81 423.51 L571.53 418.54 L575.06 413.63 L578.46 408.76 L581.85 403.90 L585.16 399.11 L588.46 394.33 L592.03 389.32 L595.99 383.97 L600.22 378.40 L604.60 372.80 L609.11 367.25 L613.77 361.67 L618.48 356.08 L623.24 350.44 L628.06 344.79 L632.83 339.18 L637.57 333.48 L642.26 327.81 L646.70 322.55 L650.76 317.89 L654.58 313.64 L658.35 309.58 L662.10 305.70 L665.81 302.01 L669.62 298.25 L673.65 294.28 L677.79 290.25 L681.90 286.35 L685.97 282.62 L690.01 279.03 L693.97 275.60 L697.87 272.35 L701.69 269.26 L705.33 266.40 L708.71 263.81 L711.93 261.45 L715.10 259.17 L718.14 257.03 L721.13 254.97 L724.47 252.80 L728.36 250.39 L732.60 247.86 L736.96 245.37 L741.56 242.92 L746.29 240.51 L750.62 238.32 L754.34 236.44 L757.67 234.79 L760.79 233.30 L763.60 232.00 L766.19 230.87 L769.00 229.77 L772.14 228.68 L775.49 227.61 L779.15 226.52 L783.24 225.38 L787.63 224.23 L792.03 223.17 L796.25 222.23 L800.47 221.38 L804.91 220.70 L809.60 220.22 L814.51 219.90 L819.76 219.70 L825.63 219.62 L831.84 219.66 L837.74 219.82 L843.04 220.12 L848.02 220.54 L852.81 221.10 L857.33 221.79 L861.65 222.62 L866.16 223.58 L871.04 224.66 L876.12 225.86 L881.25 227.18 L886.36 228.58 L891.54 230.09 L896.89 231.75 L902.42 233.55 L908.13 235.50 L914.08 237.65 L920.39 240.05 L926.94 242.65 L933.40 245.37 L939.68 248.19 L945.87 251.13 L951.94 254.17 L957.82 257.34 L963.57 260.63 L969.33 264.00 L975.16 267.49 L980.99 271.07 L986.71 274.62 L992.25 278.06 L997.68 281.46 L1003.11 284.98 L1008.57 288.63 L1014.03 292.40 L1019.52 296.30 L1025.08 300.37 L1030.67 304.58 L1036.24 308.88 L1041.67 313.20 L1047.07 317.61 L1052.70 322.27 L1058.58 327.28 L1064.69 332.53 L1071.15 337.92 L1078.10 343.54 L1085.42 349.30 L1092.85 354.88 L1100.47 360.21 L1108.21 365.36 L1115.61 370.12 L1122.47 374.40 L1128.99 378.29 L1135.37 381.95 L1141.63 385.37 L1147.75 388.56 L1153.86 391.65 L1160.06 394.69 L1166.25 397.63 L1172.35 400.47 L1178.21 403.19 L1183.97 405.81 L1189.97 408.40 L1196.48 411.05 L1203.22 413.67 L1209.72 416.12 L1215.95 418.38 L1221.94 420.47 L1227.32 422.28 L1231.83 423.74 L1235.73 424.93 L1239.45 425.96 L1243.47 426.91 L1247.32 427.71 L1250.00 428.25" fill="none" stroke="#00ff00" stroke-width="1" shape-rendering="crispEdges"/>
<line x1="56.5" y1="489" x2="56.5" y2="497" stroke="#00ff00" shape-rendering="crispEdges"/>
</svg>
<div class="a" style="left:2px;top:532px;width:1276px;height:431px;border:1px solid #555;border-radius:5px 5px 0 0;background:linear-gradient(#b9c8d8 0px,#c6d3e2 12px,#d3e0ee 27px,#d7e4f2 30px,#d7e4f2 100%)"></div>
<div class="a" style="left:3px;top:533px;width:1274px;height:429px;border:1px solid #eef4fa;border-radius:4px 4px 0 0"></div>
<svg width="1280" height="600"><rect x="17" y="545" width="2" height="9" fill="#0000ff"/><rect x="14" y="549" width="3" height="1" fill="#0000ff"/><rect x="19" y="546" width="1" height="1" fill="#0000ff"/><rect x="20" y="545" width="1" height="1" fill="#0000ff"/><rect x="21" y="544" width="1" height="1" fill="#0000ff"/><rect x="22" y="543" width="1" height="1" fill="#0000ff"/><rect x="23" y="542" width="1" height="1" fill="#0000ff"/><rect x="19" y="552" width="1" height="1" fill="#0000ff"/><rect x="20" y="553" width="1" height="1" fill="#0000ff"/><rect x="21" y="554" width="1" height="1" fill="#0000ff"/><rect x="22" y="555" width="1" height="1" fill="#0000ff"/><rect x="23" y="556" width="1" height="1" fill="#0000ff"/><rect x="24" y="557" width="1" height="1" fill="#0000ff"/><rect x="22" y="553" width="1" height="1" fill="#0000ff"/><rect x="22" y="554" width="1" height="1" fill="#0000ff"/><rect x="20" y="555" width="4" height="1" fill="#0000ff"/><rect x="22" y="556" width="2" height="1" fill="#0000ff"/><text x="32.5" y="555" font-family="Liberation Sans" font-size="12" letter-spacing="-0.3" fill="#434a50">LEDlidl.asc</text></svg>
<svg width="1280" height="984">
<defs>
<linearGradient id="swb" x1="0" y1="0" x2="0" y2="1"><stop offset="0" stop-color="#cad6e5"/><stop offset="0.48" stop-color="#c5d2e2"/><stop offset="0.52" stop-color="#c5d2e2"/><stop offset="1" stop-color="#d2deeb"/></linearGradient>
<linearGradient id="swr" x1="0" y1="0" x2="0" y2="1"><stop offset="0" stop-color="#cad6e5"/><stop offset="0.48" stop-color="#c5d2e2"/><stop offset="0.52" stop-color="#c5d2e2"/><stop offset="1" stop-color="#d2deeb"/></linearGradient>
</defs>
<rect x="1171.5" y="542.5" width="30" height="16" rx="2" fill="url(#swb)" stroke="#8292ab"/>
<rect x="1204.5" y="542.5" width="30" height="16" rx="2" fill="url(#swb)" stroke="#8292ab"/>
<rect x="1237.5" y="542.5" width="30" height="16" rx="2" fill="url(#swr)" stroke="#8292ab"/>
<rect x="1172.5" y="543.5" width="28" height="14" rx="1.5" fill="none" stroke="#fff" stroke-opacity="0.45"/>
<rect x="1205.5" y="543.5" width="28" height="14" rx="1.5" fill="none" stroke="#fff" stroke-opacity="0.45"/>
<rect x="1238.5" y="543.5" width="28" height="14" rx="1.5" fill="none" stroke="#fff" stroke-opacity="0.45"/>
<rect x="1181.5" y="550.5" width="10" height="4" rx="1" fill="#fff" stroke="#5a6478"/>
<rect x="1214.5" y="546.5" width="10" height="8" rx="1" fill="#fff" stroke="#5a6478"/>
<rect x="1217.5" y="549.5" width="4" height="2" fill="#8ea4c4" stroke="#5a6478"/>
<path d="M1248.5 547.5 L1256.5 553.5 M1256.5 547.5 L1248.5 553.5" stroke="#5a6478" stroke-width="4.2" stroke-linecap="square"/>
<path d="M1248.5 547.5 L1256.5 553.5 M1256.5 547.5 L1248.5 553.5" stroke="#fff" stroke-width="2.2" stroke-linecap="square"/>
</svg>
<div class="a" style="left:10px;top:562px;width:1260px;height:393px;background:#fff"></div>
<div class="a" style="left:10px;top:562px;width:1259px;height:392px;background:#e3e3e3"></div>
<div class="a" style="left:10px;top:562px;width:1258px;height:391px;background:#a0a0a0"></div>
<div class="a" style="left:11px;top:563px;width:1257px;height:390px;background:#696969"></div>
<div class="a" style="left:12px;top:564px;width:1256px;height:389px;background:#f3f3f3"></div>
<svg width="1280" height="984" shape-rendering="crispEdges">
<path d="M300.5 723.5 L300.5 634.5 L334.5 634.5" fill="none" stroke="#0000ff"/>
<path d="M389.5 634.5 L400.5 634.5 L400.5 723.5" fill="none" stroke="#0000ff"/>
<path d="M222.5 751.5 L222.5 723.5 L334.5 723.5" fill="none" stroke="#0000ff"/>
<path d="M377.5 723.5 L489.5 723.5" fill="none" stroke="#0000ff"/>
<path d="M489.5 601.5 L489.5 646.5" fill="none" stroke="#0000ff"/>
<path d="M489.5 690.5 L489.5 824.5" fill="none" stroke="#0000ff"/>
<path d="M489.5 868.5 L489.5 912.5 L933.5 912.5 L933.5 756.5" fill="none" stroke="#0000ff"/>
<path d="M489.5 601.5 L789.5 601.5" fill="none" stroke="#0000ff"/>
<path d="M844.5 601.5 L933.5 601.5 L933.5 713.5" fill="none" stroke="#0000ff"/>
<path d="M222.5 800.5 L222.5 812.5 L323.5 812.5" fill="none" stroke="#0000ff"/>
<path d="M378.5 812.5 L589.5 812.5" fill="none" stroke="#0000ff"/>
<path d="M589.5 601.5 L589.5 646.5" fill="none" stroke="#0000ff"/>
<path d="M589.5 690.5 L589.5 824.5" fill="none" stroke="#0000ff"/>
<path d="M589.5 868.5 L589.5 912.5" fill="none" stroke="#0000ff"/>
<path d="M677.5 601.5 L677.5 646.5" fill="none" stroke="#0000ff"/>
<path d="M677.5 690.5 L677.5 780.5" fill="none" stroke="#0000ff"/>
<path d="M677.5 823.5 L677.5 912.5" fill="none" stroke="#0000ff"/>
<path d="M677.5 712.5 L722.5 712.5" fill="none" stroke="#0000ff"/>
<path d="M722.5 601.5 L722.5 634.5" fill="none" stroke="#0000ff"/>
<path d="M722.5 690.5 L722.5 768.5" fill="none" stroke="#0000ff"/>
<path d="M722.5 823.5 L722.5 933.5" fill="none" stroke="#0000ff"/>
<path d="M789.5 601.5 L789.5 601.5" fill="none" stroke="#0000ff"/>
</svg>
<svg width="1280" height="984">
<path d="M334.5 634.5 L340.0 634.5 L345.5 623.5 L356.5 645.5 L367.5 623.5 L378.5 645.5 L384.0 634.5 L389.5 634.5" fill="none" stroke="#000080"/>
<path d="M323.5 812.5 L329.0 812.5 L334.5 801.5 L345.5 823.5 L356.5 801.5 L367.5 823.5 L373.0 812.5 L378.5 812.5" fill="none" stroke="#000080"/>
<path d="M789.5 601.5 L795.0 601.5 L800.5 590.5 L811.5 612.5 L822.5 590.5 L833.5 612.5 L839.0 601.5 L844.5 601.5" fill="none" stroke="#000080"/>
<path d="M722.5 635.0 L722.5 640.5 L734.0 646.0 L711.5 657.0 L734.0 668.0 L711.5 679.0 L722.5 684.5 L722.5 690.0" fill="none" stroke="#000080"/>
<path d="M722.5 768.5 L722.5 774.0 L734.0 779.5 L711.5 790.5 L734.0 801.5 L711.5 812.5 L722.5 818.0 L722.5 823.5" fill="none" stroke="#000080"/>
<path d="M334 723.5 L353.5 723.5 M357.5 723.5 L377 723.5 M353.5 712 L353.5 735 M357.5 712 L357.5 735" stroke="#000080" fill="none"/>
<path d="M677.5 780 L677.5 798.5 M677.5 804.5 L677.5 823 M666 798.5 L690 798.5 M666 804.5 L690 804.5" stroke="#000080" fill="none"/>
<path d="M489.5 646 L489.5 659 M478 659.5 L501 659.5 M489.5 659.5 L478 676.5 L501 676.5 Z M489.5 676.5 L489.5 691" stroke="#000080" fill="none"/>
<path d="M589.5 646 L589.5 659 M578 659.5 L601 659.5 M589.5 659.5 L578 676.5 L601 676.5 Z M589.5 676.5 L589.5 691" stroke="#000080" fill="none"/>
<path d="M489.5 824 L489.5 837 M478 837.5 L501 837.5 M489.5 837.5 L478 854.5 L501 854.5 Z M489.5 854.5 L489.5 869" stroke="#000080" fill="none"/>
<path d="M589.5 824 L589.5 837 M578 837.5 L601 837.5 M589.5 837.5 L578 854.5 L601 854.5 Z M589.5 854.5 L589.5 869" stroke="#000080" fill="none"/>
<path d="M677.5 646 L677.5 659 M666 659.5 L689 659.5 L677.5 676.5 Z M666 676.5 L689 676.5 M677.5 676.5 L677.5 691" stroke="#000080" fill="none"/>
<path d="M933.5 713 L933.5 726 M922 726.5 L945 726.5 L933.5 743.5 Z M922 743.5 L945 743.5 M933.5 743.5 L933.5 758" stroke="#000080" fill="none"/>
<path d="M950.5 729.5 Q953 726 956 726.5 Q959 727 960.5 731 Q962 736 966 736.5 L970 736" stroke="#000080" stroke-width="1.1" fill="none"/>
<path d="M966 734.5 L973 734.5 L969.5 740.5" stroke="#000080" stroke-width="1.1" fill="none"/>
<path d="M950.5 740.5 Q953 737 956 737.5 Q959 738 960.5 742 Q962 747 966 747.5 L970 747" stroke="#000080" stroke-width="1.1" fill="none"/>
<path d="M966 745.5 L973 745.5 L969.5 751.5" stroke="#000080" stroke-width="1.1" fill="none"/>
<circle cx="222.5" cy="772.8" r="21.5" fill="none" stroke="#000080"/>
<path d="M217 759.5 L229 759.5 M222.5 754 L222.5 766 M217 787.5 L229 787.5 M222.5 794 L222.5 800" stroke="#000080" fill="none"/>
<path d="M709 933.5 L735 933.5 L722.5 946.5 Z" stroke="#000080" fill="none"/>
<rect x="297" y="720" width="7" height="7" fill="#0000ff"/>
<rect x="397" y="720" width="7" height="7" fill="#0000ff"/>
<rect x="486" y="720" width="7" height="7" fill="#0000ff"/>
<rect x="586" y="598" width="7" height="7" fill="#0000ff"/>
<rect x="674" y="598" width="7" height="7" fill="#0000ff"/>
<rect x="719" y="598" width="7" height="7" fill="#0000ff"/>
<rect x="674" y="709" width="7" height="7" fill="#0000ff"/>
<rect x="719" y="709" width="7" height="7" fill="#0000ff"/>
<rect x="586" y="809" width="7" height="7" fill="#0000ff"/>
<rect x="586" y="909" width="7" height="7" fill="#0000ff"/>
<rect x="674" y="909" width="7" height="7" fill="#0000ff"/>
<rect x="719" y="909" width="7" height="7" fill="#0000ff"/>
<text x="360" y="619" text-anchor="middle" font-family="Liberation Sans" font-weight="bold" font-size="16" letter-spacing="0" fill="#000">R1</text>
<text x="361" y="660" text-anchor="middle" font-family="Liberation Sans" font-weight="bold" font-size="16" letter-spacing="0" fill="#000">1e6</text>
<text x="354" y="707" text-anchor="middle" font-family="Liberation Sans" font-weight="bold" font-size="16" letter-spacing="0" fill="#000">C1</text>
<text x="354" y="748" text-anchor="middle" font-family="Liberation Sans" font-weight="bold" font-size="16" letter-spacing="0" fill="#000">560n</text>
<text x="239" y="751" text-anchor="start" font-family="Liberation Sans" font-weight="bold" font-size="16" letter-spacing="0" fill="#000">V1</text>
<text x="240" y="807" text-anchor="start" font-family="Liberation Sans" font-weight="bold" font-size="16" letter-spacing="-0.1" fill="#000">SINE(0 325 50 0 0 90)</text>
<text x="350" y="796" text-anchor="middle" font-family="Liberation Sans" font-weight="bold" font-size="16" letter-spacing="0" fill="#000">R2</text>
<text x="350" y="838" text-anchor="middle" font-family="Liberation Sans" font-weight="bold" font-size="16" letter-spacing="0" fill="#000">10</text>
<text x="482" y="651" text-anchor="end" font-family="Liberation Sans" font-weight="bold" font-size="16" letter-spacing="0" fill="#000">D1</text>
<text x="483" y="696" text-anchor="end" font-family="Liberation Sans" font-weight="bold" font-size="16" letter-spacing="0" fill="#000">MURS120</text>
<text x="583" y="651" text-anchor="end" font-family="Liberation Sans" font-weight="bold" font-size="16" letter-spacing="0" fill="#000">D3</text>
<text x="583" y="696" text-anchor="end" font-family="Liberation Sans" font-weight="bold" font-size="16" letter-spacing="0" fill="#000">MURS120</text>
<text x="672" y="651" text-anchor="end" font-family="Liberation Sans" font-weight="bold" font-size="16" letter-spacing="0" fill="#000">D5</text>
<text x="672" y="696" text-anchor="end" font-family="Liberation Sans" font-weight="bold" font-size="16" letter-spacing="0" fill="#000">MURS120</text>
<text x="482" y="829" text-anchor="end" font-family="Liberation Sans" font-weight="bold" font-size="16" letter-spacing="0" fill="#000">D2</text>
<text x="483" y="873" text-anchor="end" font-family="Liberation Sans" font-weight="bold" font-size="16" letter-spacing="0" fill="#000">MURS120</text>
<text x="583" y="829" text-anchor="end" font-family="Liberation Sans" font-weight="bold" font-size="16" letter-spacing="0" fill="#000">D4</text>
<text x="583" y="873" text-anchor="end" font-family="Liberation Sans" font-weight="bold" font-size="16" letter-spacing="0" fill="#000">MURS120</text>
<text x="736" y="657" text-anchor="start" font-family="Liberation Sans" font-weight="bold" font-size="16" letter-spacing="0" fill="#000">R3</text>
<text x="736" y="682" text-anchor="start" font-family="Liberation Sans" font-weight="bold" font-size="16" letter-spacing="0" fill="#000">100</text>
<text x="736" y="790" text-anchor="start" font-family="Liberation Sans" font-weight="bold" font-size="16" letter-spacing="0" fill="#000">R4</text>
<text x="737" y="815" text-anchor="start" font-family="Liberation Sans" font-weight="bold" font-size="16" letter-spacing="0" fill="#000">1e6</text>
<text x="683" y="790" text-anchor="start" font-family="Liberation Sans" font-weight="bold" font-size="16" letter-spacing="0" fill="#000">C2</text>
<text x="684" y="824" text-anchor="start" font-family="Liberation Sans" font-weight="bold" font-size="16" letter-spacing="0" fill="#000">1μ8</text>
<text x="815" y="586" text-anchor="middle" font-family="Liberation Sans" font-weight="bold" font-size="16" letter-spacing="0" fill="#000">R5</text>
<text x="815" y="627" text-anchor="middle" font-family="Liberation Sans" font-weight="bold" font-size="16" letter-spacing="0" fill="#000">100</text>
<text x="939" y="718" text-anchor="start" font-family="Liberation Sans" font-weight="bold" font-size="16" letter-spacing="0" fill="#000">D6</text>
<text x="939" y="762" text-anchor="start" font-family="Liberation Sans" font-weight="bold" font-size="16" letter-spacing="0.2" fill="#000">NSSW008CT-P1</text>
<text x="939" y="782" text-anchor="start" font-family="Liberation Sans" font-weight="bold" font-size="16" letter-spacing="0" fill="#000">n=40</text>
<text x="267" y="923" text-anchor="start" font-family="Liberation Sans" font-weight="bold" font-size="16" letter-spacing="-0.17" fill="#000">.tran 0 1 0 10μ uic</text>
</svg>
<div class="a" style="left:0;top:963px;width:1280px;height:2px;background:#fff"></div>
<div class="a" style="left:0;top:965px;width:1280px;height:1px;background:#8a8a8a"></div>
<div class="a" style="left:0;top:966px;width:1280px;height:18px;background:#f0f0f0"></div>
<div class="a" style="left:1px;top:967px;width:1278px;height:16px;background:#f0eded"></div>
<div class="a" style="left:1279px;top:967px;width:1px;height:16px;background:#d8d8d8"></div>
<svg width="1280" height="984"><text x="2" y="980" font-family="Liberation Sans" font-size="11.5" fill="#000" xml:space="preserve">x = 0.00ms    y = 44.64mA</text><text x="1276.5" y="980" text-anchor="end" font-family="Liberation Sans" font-size="12" fill="#000">Alternate</text></svg>
</body></html>
